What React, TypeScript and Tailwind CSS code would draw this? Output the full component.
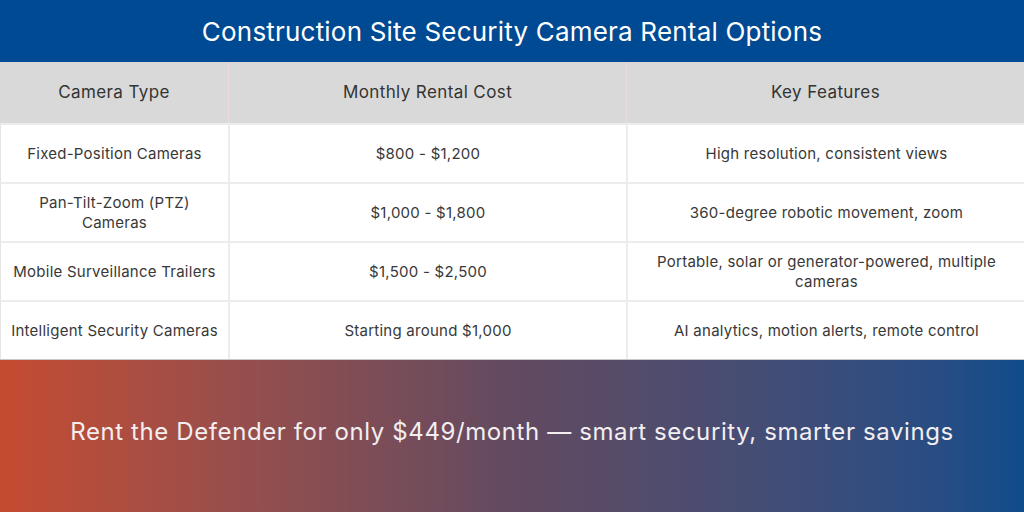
import React from 'react';

const rows = [
  ['Fixed-Position Cameras', '$800 - $1,200', 'High resolution, consistent views'],
  ['Pan-Tilt-Zoom (PTZ)\nCameras', '$1,000 - $1,800', '360-degree robotic movement, zoom'],
  ['Mobile Surveillance Trailers', '$1,500 - $2,500', 'Portable, solar or generator-powered, multiple cameras'],
  ['Intelligent Security Cameras', 'Starting around $1,000', 'AI analytics, motion alerts, remote control'],
];

export default function App() {
  return (
    <div className="w-[1024px] h-[512px] flex flex-col overflow-hidden bg-white" style={{ fontFamily: 'Inter, "Open Sans", sans-serif' }}>
      <div className="h-[62px] shrink-0 bg-[#004a93] flex items-center justify-center">
        <h1 className="text-[26px] text-white font-normal tracking-[0.2px]">Construction Site Security Camera Rental Options</h1>
      </div>

      <div className="grid grid-cols-[229px_398px_397px] h-[61px] shrink-0 bg-[#d9d9d9] text-[17px] tracking-[0.4px] text-[#333]">
        <div className="flex items-center justify-center border-r border-[#ecd9e0]">Camera Type</div>
        <div className="flex items-center justify-center border-r border-[#ecd9e0]">Monthly Rental Cost</div>
        <div className="flex items-center justify-center">Key Features</div>
      </div>

      {rows.map((r, i) => (
        <div key={i} className="grid grid-cols-[229px_398px_397px] h-[59px] shrink-0 border-t-2 border-[#ececec] text-[15px] tracking-[0.25px] leading-[20px] text-[#383838] border-l border-l-[#e4e4e4]">
          <div className="flex items-center justify-center text-center border-r-2 border-[#ececec] whitespace-pre">{r[0]}</div>
          <div className="flex items-center justify-center text-center px-4 border-r-2 border-[#ececec]">{r[1]}</div>
          <div className="flex items-center justify-center text-center px-6">{r[2]}</div>
        </div>
      ))}

      <div className="flex-1 border-t border-[#c8c8c8] bg-gradient-to-r from-[#c54b2f] via-[#624a60] to-[#0f4c8a] flex items-center justify-center pb-2">
        <p className="text-[24px] text-[#f3eef0] tracking-[0.6px]">Rent the Defender for only $449/month — smart security, smarter savings</p>
      </div>
    </div>
  );
}
